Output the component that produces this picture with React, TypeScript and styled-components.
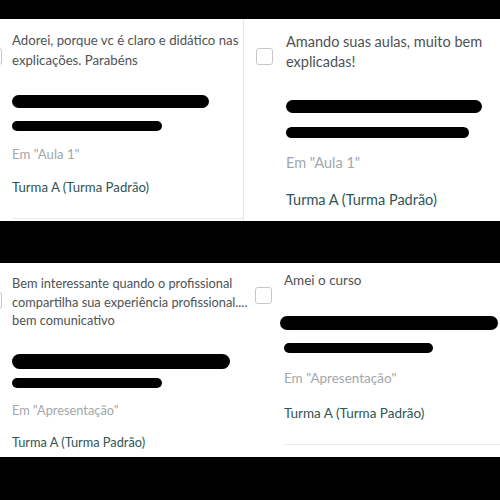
import React from "react";
import styled, { createGlobalStyle } from "styled-components";

const GlobalStyle = createGlobalStyle`
  html, body {
    margin: 0;
    padding: 0;
    background: #000;
  }
  body {
    font-family: Lato, "Noto Sans", sans-serif;
  }
`;

const Page = styled.div`
  width: 500px;
  height: 500px;
  background: #000;
  display: grid;
  grid-template-rows: 19px 202px 42px 194px 43px;
  overflow: hidden;
`;

const Row = styled.div<{ $cols: string; $line?: boolean }>`
  display: grid;
  grid-template-columns: ${(p) => p.$cols};
  background: ${(p) => (p.$line ? "#e6e8e8" : "#fff")};
  column-gap: ${(p) => (p.$line ? "1px" : "0")};
`;

const Panel = styled.div`
  background: #fff;
  display: flex;
  align-items: flex-start;
  overflow: hidden;
`;

const CheckBox = styled.div<{ $left: number; $top: number; $gap: number }>`
  flex: none;
  width: 15px;
  height: 15px;
  margin-left: ${(p) => p.$left}px;
  margin-top: ${(p) => p.$top}px;
  margin-right: ${(p) => p.$gap}px;
  border: 1px solid #c4c8ca;
  border-radius: 3px;
  background: #fff;
`;

const Body = styled.div`
  flex: 1;
  display: flex;
  flex-direction: column;
  min-width: 0;
`;

const Comment = styled.div<{ $top: number; $size: number; $lh: number }>`
  margin-top: ${(p) => p.$top}px;
  font-size: ${(p) => p.$size}px;
  line-height: ${(p) => p.$lh}px;
  color: #4e5255;
  white-space: nowrap;
`;

const Redacted = styled.div<{ $top: number; $width: number; $height: number; $shift?: number }>`
  margin-top: ${(p) => p.$top}px;
  margin-left: ${(p) => p.$shift ?? 0}px;
  width: ${(p) => p.$width}px;
  height: ${(p) => p.$height}px;
  background: #000;
  border-radius: ${(p) => p.$height / 2}px;
`;

const Lesson = styled.div<{ $top: number; $size: number }>`
  margin-top: ${(p) => p.$top}px;
  font-size: ${(p) => p.$size}px;
  line-height: 16px;
  color: #a2a7aa;
`;

const Group = styled.div<{ $top: number; $size: number }>`
  margin-top: ${(p) => p.$top}px;
  font-size: ${(p) => p.$size}px;
  line-height: 16px;
  color: #2f5556;
`;

const Divider = styled.div<{ $top: number }>`
  margin-top: ${(p) => p.$top}px;
  height: 1px;
  background: #e9ebeb;
`;

type Bar = { top: number; width: number; height: number; shift?: number };

type CardProps = {
  boxLeft: number;
  boxTop: number;
  boxGap: number;
  lines: string[];
  size: number;
  lh: number;
  textTop: number;
  bars: Bar[];
  lesson: string;
  lessonTop: number;
  groupTop: number;
  dividerTop?: number;
};

const Card = (props: CardProps) => (
  <Panel>
    <CheckBox $left={props.boxLeft} $top={props.boxTop} $gap={props.boxGap} />
    <Body>
      <Comment $top={props.textTop} $size={props.size} $lh={props.lh}>
        {props.lines.map((l, i) => (
          <div key={i}>{l}</div>
        ))}
      </Comment>
      {props.bars.map((b, i) => (
        <Redacted key={i} $top={b.top} $width={b.width} $height={b.height} $shift={b.shift} />
      ))}
      <Lesson $top={props.lessonTop} $size={props.size}>
        Em "{props.lesson}"
      </Lesson>
      <Group $top={props.groupTop} $size={props.size}>
        Turma A (Turma Padrão)
      </Group>
      {props.dividerTop !== undefined && <Divider $top={props.dividerTop} />}
    </Body>
  </Panel>
);

export default function App() {
  return (
    <>
      <GlobalStyle />
      <Page>
        <div />
        <Row $cols="243px 256px" $line>
          <Card
            boxLeft={-15}
            boxTop={29}
            boxGap={10}
            lines={["Adorei, porque vc é claro e didático nas", "explicações. Parabéns"]}
            size={13.2}
            lh={20}
            textTop={11}
            bars={[
              { top: 25, width: 197, height: 13 },
              { top: 13, width: 150, height: 10 },
            ]}
            lesson="Aula 1"
            lessonTop={15}
            groupTop={17}
            dividerTop={23}
          />
          <Card
            boxLeft={12}
            boxTop={29}
            boxGap={13}
            lines={["Amando suas aulas, muito bem", "explicadas!"]}
            size={14.5}
            lh={20}
            textTop={13}
            bars={[
              { top: 28, width: 196, height: 13 },
              { top: 14, width: 183, height: 11 },
            ]}
            lesson="Aula 1"
            lessonTop={17}
            groupTop={21}
          />
        </Row>
        <div />
        <Row $cols="250px 250px">
          <Card
            boxLeft={-15}
            boxTop={29}
            boxGap={10}
            lines={[
              "Bem interessante quando o profissional",
              "compartilha sua experiência profissional....",
              "bem comunicativo",
            ]}
            size={12.8}
            lh={18.5}
            textTop={11}
            bars={[
              { top: 24, width: 218, height: 15 },
              { top: 9, width: 150, height: 10 },
            ]}
            lesson="Apresentação"
            lessonTop={14}
            groupTop={16}
          />
          <Card
            boxLeft={5}
            boxTop={24}
            boxGap={12}
            lines={["Amei o curso"]}
            size={13.5}
            lh={18}
            textTop={8}
            bars={[
              { top: 27, width: 218, height: 14, shift: -4 },
              { top: 13, width: 149, height: 10 },
            ]}
            lesson="Apresentação"
            lessonTop={17}
            groupTop={19}
            dividerTop={23}
          />
        </Row>
        <div />
      </Page>
    </>
  );
}
